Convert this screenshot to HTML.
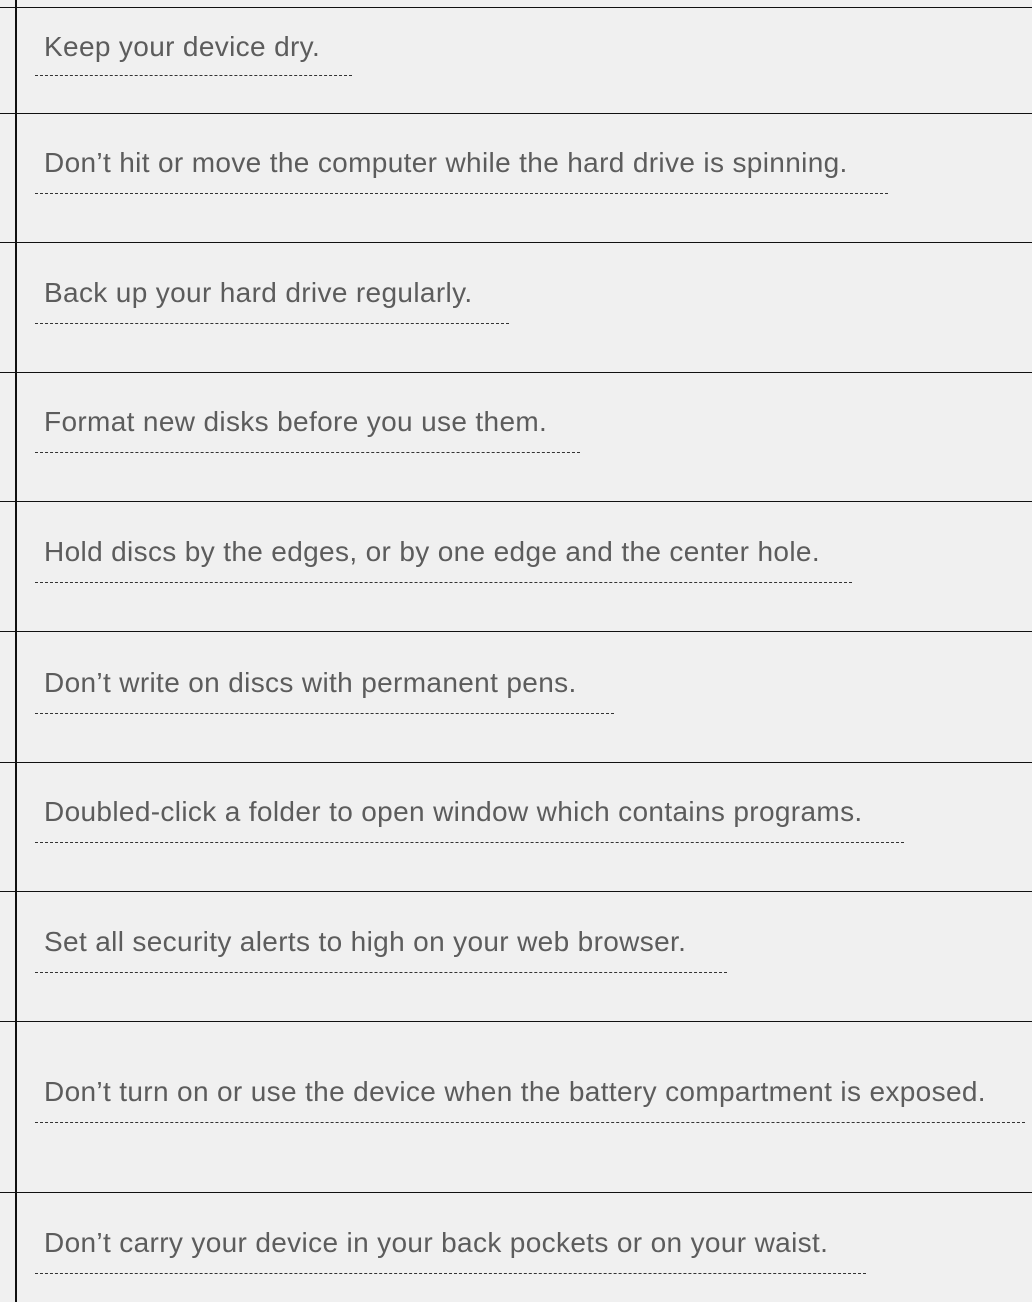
<!DOCTYPE html>
<html><head><meta charset="utf-8"><style>
html,body{margin:0;padding:0;background:#f0f0f0;width:1032px;height:1302px;overflow:hidden;position:relative;font-family:"Liberation Sans",Arial,sans-serif}
.v{position:absolute;left:15px;top:0;width:2px;height:1302px;background:#111}
.h{position:absolute;left:0;width:1032px;height:1px;background:#111}
.t{position:absolute;left:44px;font-size:28px;color:#5c5c5c;white-space:nowrap;line-height:30px;letter-spacing:0.35px}
.d{position:absolute;left:35px;height:0;border-top:1px dashed #333}
</style></head><body>
<div class="v"></div>
<div class="h" style="top:7px"></div>
<div class="h" style="top:113px"></div>
<div class="h" style="top:242px"></div>
<div class="h" style="top:372px"></div>
<div class="h" style="top:501px"></div>
<div class="h" style="top:631px"></div>
<div class="h" style="top:762px"></div>
<div class="h" style="top:891px"></div>
<div class="h" style="top:1021px"></div>
<div class="h" style="top:1192px"></div>

<div class="t" style="top:32px">Keep your device dry.</div><div class="d" style="top:75px;width:317px"></div>
<div class="t" style="top:148px">Don’t hit or move the computer while the hard drive is spinning.</div><div class="d" style="top:193px;width:853px"></div>
<div class="t" style="top:278px">Back up your hard drive regularly.</div><div class="d" style="top:323px;width:474px"></div>
<div class="t" style="top:407px">Format new disks before you use them.</div><div class="d" style="top:452px;width:545px"></div>
<div class="t" style="top:537px">Hold discs by the edges, or by one edge and the center hole.</div><div class="d" style="top:582px;width:817px"></div>
<div class="t" style="top:668px">Don’t write on discs with permanent pens.</div><div class="d" style="top:713px;width:579px"></div>
<div class="t" style="top:797px">Doubled-click a folder to open window which contains programs.</div><div class="d" style="top:842px;width:869px"></div>
<div class="t" style="top:927px">Set all security alerts to high on your web browser.</div><div class="d" style="top:972px;width:692px"></div>
<div class="t" style="top:1077px">Don’t turn on or use the device when the battery compartment is exposed.</div><div class="d" style="top:1122px;width:990px"></div>
<div class="t" style="top:1228px">Don’t carry your device in your back pockets or on your waist.</div><div class="d" style="top:1273px;width:831px"></div>
</body></html>
